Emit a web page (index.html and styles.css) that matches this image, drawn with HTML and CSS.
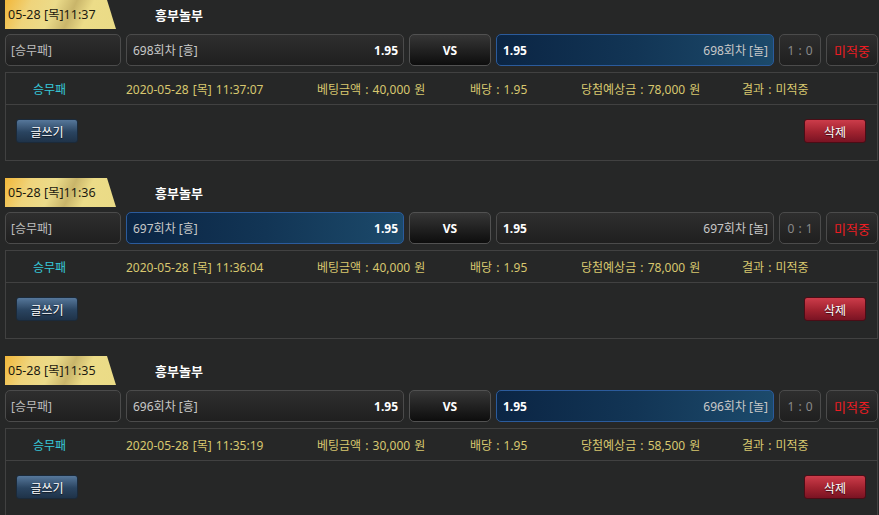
FILE: index.html
```html
<!DOCTYPE html>
<html lang="ko">
<head>
<meta charset="utf-8">
<link rel="stylesheet" href="styles.css">
</head>
<body>
<div class="list">

  <section class="bet">
    <div class="bet-head">
      <div class="tab">05-28 [목]11:37</div>
      <div class="game">흥부놀부</div>
    </div>
    <div class="picks">
      <div class="box type">[승무패]</div>
      <div class="box team"><span class="name">698회차 [흥]</span><span class="odd">1.95</span></div>
      <div class="box vs">VS</div>
      <div class="box team sel"><span class="odd">1.95</span><span class="name">698회차 [놀]</span></div>
      <div class="box score">1 : 0</div>
      <div class="box res">미적중</div>
    </div>
    <div class="panel">
      <div class="info">
        <span class="cyan">승무패</span>
        <span>2020-05-28 [목] 11:37:07</span>
        <span>베팅금액 : 40,000 원</span>
        <span>배당 : 1.95</span>
        <span>당첨예상금 : 78,000 원</span>
        <span>결과 : 미적중</span>
      </div>
      <div class="actions">
        <button class="btn blue">글쓰기</button>
        <button class="btn red">삭제</button>
      </div>
    </div>
  </section>

  <section class="bet">
    <div class="bet-head">
      <div class="tab">05-28 [목]11:36</div>
      <div class="game">흥부놀부</div>
    </div>
    <div class="picks">
      <div class="box type">[승무패]</div>
      <div class="box team sel"><span class="name">697회차 [흥]</span><span class="odd">1.95</span></div>
      <div class="box vs">VS</div>
      <div class="box team"><span class="odd">1.95</span><span class="name">697회차 [놀]</span></div>
      <div class="box score">0 : 1</div>
      <div class="box res">미적중</div>
    </div>
    <div class="panel">
      <div class="info">
        <span class="cyan">승무패</span>
        <span>2020-05-28 [목] 11:36:04</span>
        <span>베팅금액 : 40,000 원</span>
        <span>배당 : 1.95</span>
        <span>당첨예상금 : 78,000 원</span>
        <span>결과 : 미적중</span>
      </div>
      <div class="actions">
        <button class="btn blue">글쓰기</button>
        <button class="btn red">삭제</button>
      </div>
    </div>
  </section>

  <section class="bet">
    <div class="bet-head">
      <div class="tab">05-28 [목]11:35</div>
      <div class="game">흥부놀부</div>
    </div>
    <div class="picks">
      <div class="box type">[승무패]</div>
      <div class="box team"><span class="name">696회차 [흥]</span><span class="odd">1.95</span></div>
      <div class="box vs">VS</div>
      <div class="box team sel"><span class="odd">1.95</span><span class="name">696회차 [놀]</span></div>
      <div class="box score">1 : 0</div>
      <div class="box res">미적중</div>
    </div>
    <div class="panel">
      <div class="info">
        <span class="cyan">승무패</span>
        <span>2020-05-28 [목] 11:35:19</span>
        <span>베팅금액 : 30,000 원</span>
        <span>배당 : 1.95</span>
        <span>당첨예상금 : 58,500 원</span>
        <span>결과 : 미적중</span>
      </div>
      <div class="actions">
        <button class="btn blue">글쓰기</button>
        <button class="btn red">삭제</button>
      </div>
    </div>
  </section>

</div>
</body>
</html>
```
FILE: styles.css
```css
* { box-sizing: border-box; }
html, body {
  margin: 0;
  padding: 0;
  background: #262727;
  font-family: "Noto Sans", "Noto Sans CJK KR", sans-serif;
  font-size: 12px;
  color: #c8c8c8;
  overflow: hidden;
}
.list {
  display: flex;
  flex-direction: column;
  gap: 17px;
  padding: 0 1px 0 5px;
}
.bet {
  display: flex;
  flex-direction: column;
}
.bet-head {
  display: flex;
  align-items: center;
  height: 29px;
}
.tab {
  width: 111px;
  height: 29px;
  line-height: 29px;
  padding-left: 3px;
  color: #1c1a10;
  font-size: 12.5px;
  background: linear-gradient(115deg, #f2b73a 0%, #efd47c 22%, #ebdb8a 42%, #c9b56a 58%, #ecdc88 72%, #eadb86 100%);
  clip-path: polygon(0 0, 102px 0, 111px 100%, 0 100%);
}
.game {
  margin-left: 39px;
  color: #ffffff;
  font-weight: bold;
  font-size: 13px;
}
.picks {
  display: flex;
  gap: 5px;
  margin-top: 5px;
  height: 32px;
}
.box {
  height: 32px;
  border: 1px solid #4b4b4b;
  border-radius: 5px;
  background: linear-gradient(#2e2e2e, #1f1f1f);
  display: flex;
  align-items: center;
}
.type { width: 116px; padding-left: 5px; color: #bdbdbd; }
.team {
  width: 278px;
  padding: 0 5px 0 6px;
  justify-content: space-between;
}
.team .name { color: #c8c8c8; }
.team .odd { color: #ffffff; font-weight: bold; }
.team.sel {
  border-color: #2b5b9c;
  background: linear-gradient(90deg, #0b2544 0%, #123555 50%, #1c4a6b 100%);
}
.vs {
  width: 82px;
  justify-content: center;
  color: #ffffff;
  font-weight: bold;
  border-color: #515151;
  background: linear-gradient(#363636, #0d0d0d);
}
.score { width: 42px; justify-content: center; color: #8a8a8a; word-spacing: 1px; }
.res { width: 52px; justify-content: center; color: #ee1c22; font-size: 13px; }
.panel {
  margin-top: 6px;
  border: 1px solid #414141;
  height: 89px;
}
.info {
  display: grid;
  grid-template-columns: 93px 191px 153px 111px 161px auto;
  align-items: center;
  height: 32px;
  padding-left: 27px;
  border-bottom: 1px solid #414141;
  color: #d8c76f;
  word-spacing: 1px;
}
.cyan { color: #36c8d8; }
.actions {
  display: flex;
  justify-content: space-between;
  padding: 14px 11px 0 10px;
}
.btn {
  width: 62px;
  height: 24px;
  border-radius: 3px;
  font-family: "Noto Sans CJK KR", sans-serif;
  font-size: 12px;
  color: #ffffff;
  text-shadow: 0 1px 1px rgba(0,0,0,0.7);
  cursor: pointer;
  padding: 0;
}
.blue {
  border: 1px solid #1b2a3a;
  background: linear-gradient(#56779a, #2a4460 55%, #1f3349);
}
.red {
  border: 1px solid #4a0d16;
  background: linear-gradient(#cc3c4a, #a0222f 55%, #7a1323);
}
```
